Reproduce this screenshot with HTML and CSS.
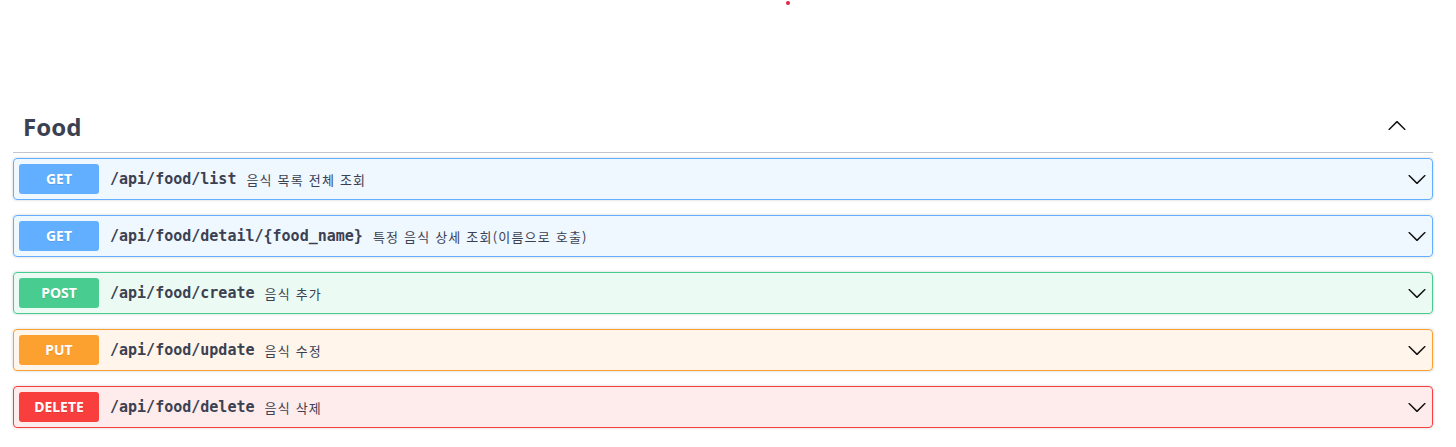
FILE: index.html
```html
<!DOCTYPE html>
<html lang="ko">
<head>
<meta charset="utf-8">
<title>Food API</title>
<link rel="stylesheet" href="styles.css">
</head>
<body>
<span class="dot"></span>
<main class="wrapper">
  <section class="tag-section">
    <h3 class="tag-header">
      <span class="tag-name">Food</span>
      <button class="expand-tag" aria-label="collapse">
        <svg width="20" height="20" viewBox="0 0 20 20"><path d="M17.418 13.891c.272.268.709.268.979 0s.271-.701 0-.969l-7.908-7.830c-.27-.268-.707-.268-.979 0l-7.908 7.830c-.27.268-.27.701 0 .969.271.268.709.268.979 0L10 6.75l7.418 7.141z"/></svg>
      </button>
    </h3>
    <div class="opblock get">
      <div class="summary">
        <span class="method">GET</span>
        <span class="path">/api/food/list</span>
        <span class="desc">음식 목록 전체 조회</span>
        <svg class="arrow" width="20" height="20" viewBox="0 0 20 20"><path d="M17.418 6.109c.272-.268.709-.268.979 0s.271.701 0 .969l-7.908 7.83c-.27.268-.707.268-.979 0l-7.908-7.83c-.27-.268-.27-.701 0-.969.271-.268.709-.268.979 0L10 13.25l7.418-7.141z"/></svg>
      </div>
    </div>
    <div class="opblock get">
      <div class="summary">
        <span class="method">GET</span>
        <span class="path">/api/food/detail/{food_name}</span>
        <span class="desc">특정 음식 상세 조회(이름으로 호출)</span>
        <svg class="arrow" width="20" height="20" viewBox="0 0 20 20"><path d="M17.418 6.109c.272-.268.709-.268.979 0s.271.701 0 .969l-7.908 7.83c-.27.268-.707.268-.979 0l-7.908-7.83c-.27-.268-.27-.701 0-.969.271-.268.709-.268.979 0L10 13.25l7.418-7.141z"/></svg>
      </div>
    </div>
    <div class="opblock post">
      <div class="summary">
        <span class="method">POST</span>
        <span class="path">/api/food/create</span>
        <span class="desc">음식 추가</span>
        <svg class="arrow" width="20" height="20" viewBox="0 0 20 20"><path d="M17.418 6.109c.272-.268.709-.268.979 0s.271.701 0 .969l-7.908 7.83c-.27.268-.707.268-.979 0l-7.908-7.83c-.27-.268-.27-.701 0-.969.271-.268.709-.268.979 0L10 13.25l7.418-7.141z"/></svg>
      </div>
    </div>
    <div class="opblock put">
      <div class="summary">
        <span class="method">PUT</span>
        <span class="path">/api/food/update</span>
        <span class="desc">음식 수정</span>
        <svg class="arrow" width="20" height="20" viewBox="0 0 20 20"><path d="M17.418 6.109c.272-.268.709-.268.979 0s.271.701 0 .969l-7.908 7.83c-.27.268-.707.268-.979 0l-7.908-7.83c-.27-.268-.27-.701 0-.969.271-.268.709-.268.979 0L10 13.25l7.418-7.141z"/></svg>
      </div>
    </div>
    <div class="opblock delete">
      <div class="summary">
        <span class="method">DELETE</span>
        <span class="path">/api/food/delete</span>
        <span class="desc">음식 삭제</span>
        <svg class="arrow" width="20" height="20" viewBox="0 0 20 20"><path d="M17.418 6.109c.272-.268.709-.268.979 0s.271.701 0 .969l-7.908 7.83c-.27.268-.707.268-.979 0l-7.908-7.83c-.27-.268-.27-.701 0-.969.271-.268.709-.268.979 0L10 13.25l7.418-7.141z"/></svg>
      </div>
    </div>
  </section>
</main>
</body>
</html>
```
FILE: styles.css
```css
* { box-sizing: border-box; }
html, body {
  margin: 0;
  padding: 0;
  background: #fff;
  font-family: "Noto Sans", "Noto Sans CJK KR", sans-serif;
  color: #3b4151;
}
.dot {
  position: absolute;
  left: 786px;
  top: 1px;
  width: 4px;
  height: 4px;
  border-radius: 50%;
  background: #e5243f;
}
.wrapper {
  padding: 102px 0 0 13px;
  width: 1433px;
}
.tag-header {
  display: flex;
  align-items: center;
  margin: 0 0 5px;
  padding: 10px 20px 10px 10px;
  border-bottom: 1px solid rgba(59, 65, 81, 0.3);
  font-size: 24px;
  line-height: 30px;
  font-weight: 700;
  color: #3b4151;
}
.tag-name { flex: 1; }
.expand-tag {
  display: flex;
  border: none;
  background: none;
  padding: 0 6px 3px 0;
  margin: 0;
  cursor: pointer;
}
.expand-tag svg { fill: #111; }
.opblock {
  border: 1px solid;
  border-radius: 4px;
  margin: 0 0 15px;
  box-shadow: 0 0 3px rgba(0, 0, 0, 0.19);
}
.summary {
  display: flex;
  align-items: center;
  padding: 5px;
}
.method {
  min-width: 80px;
  padding: 6px 0;
  border-radius: 3px;
  font-family: "Noto Sans", sans-serif;
  font-size: 14px;
  line-height: 18px;
  font-weight: 700;
  color: #fff;
  text-align: center;
  text-shadow: 0 1px 0 rgba(0, 0, 0, 0.1);
}
.path {
  padding: 0 10px 0 11px;
  font-family: "DejaVu Sans Mono", "Liberation Mono", monospace;
  font-size: 15px;
  font-weight: 600;
  color: #3b4151;
}
.desc {
  flex: 1;
  font-family: "Noto Sans CJK KR", "Noto Sans", sans-serif;
  font-size: 13px;
  letter-spacing: 1.2px;
  color: #3b4151;
}
.arrow { fill: #111; flex-shrink: 0; }

.get { border-color: #61affe; background: rgba(97, 175, 254, 0.1); }
.get .method { background: #61affe; }
.post { border-color: #49cc90; background: rgba(73, 204, 144, 0.1); }
.post .method { background: #49cc90; }
.put { border-color: #fca130; background: rgba(252, 161, 48, 0.1); }
.put .method { background: #fca130; }
.delete { border-color: #f93e3e; background: rgba(249, 62, 62, 0.1); }
.delete .method { background: #f93e3e; }
```
